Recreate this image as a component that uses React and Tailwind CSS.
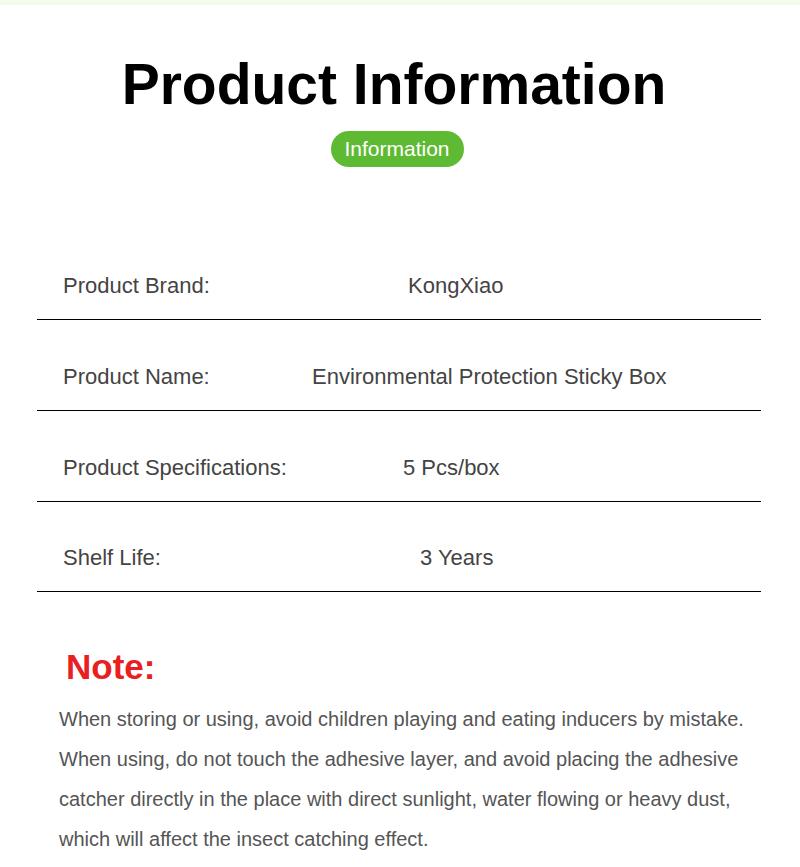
const rows = [
  { label: "Product Brand:", value: "KongXiao", pad: "pl-[371px]", h: "h-[91px]" },
  { label: "Product Name:", value: "Environmental Protection Sticky Box", pad: "pl-[275px]", h: "h-[91px]" },
  { label: "Product Specifications:", value: "5 Pcs/box", pad: "pl-[366px]", h: "h-[91px]" },
  { label: "Shelf Life:", value: "3 Years", pad: "pl-[383px]", h: "h-[90px]" },
];

export default function App() {
  return (
    <div className="w-[800px] h-[867px] bg-white overflow-hidden font-['Liberation_Sans',Arial,sans-serif]">
      <div className="h-[5px] bg-[#f3fbec]" />
      <div className="flex flex-col items-center pr-[12px]">
        <h1 className="mt-[44px] text-[57px] leading-[70px] font-bold text-black">Product Information</h1>
        <div className="mt-[12px] ml-[6px] h-[36px] w-[133px] rounded-full bg-[#5fba33] flex items-center justify-center text-white text-[21px]">
          Information
        </div>
      </div>

      <div className="mt-[62px] ml-[37px] mr-[39px]">
        {rows.map((r) => (
          <div key={r.label} className={`${r.h} pt-[22px] flex items-center border-b-[1.5px] border-black`}>
            <div className="w-[263px] pl-[26px] text-[22px] text-[#444]">{r.label}</div>
            <div className={`flex-1 text-[22px] text-[#444] ${r.pad} -ml-[263px]`}>{r.value}</div>
          </div>
        ))}
      </div>

      <div className="mt-[55px] pl-[66px] text-[35px] leading-[40px] font-bold text-[#e8201f]">Note:</div>
      <p className="mt-[12px] pl-[59px] pr-[40px] text-[20px] leading-[40px] text-[#555]">
        When storing or using, avoid children playing and eating inducers by mistake. When using, do not touch the adhesive layer, and avoid placing the adhesive catcher directly in the place with direct sunlight, water flowing or heavy dust, which will affect the insect catching effect.
      </p>
    </div>
  );
}
